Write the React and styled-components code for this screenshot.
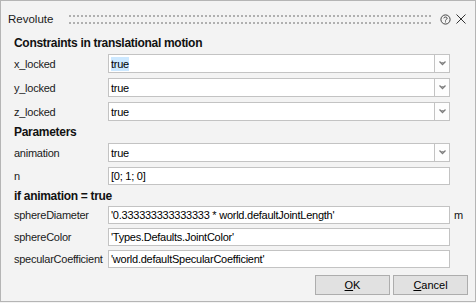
import React from "react";
import styled, { createGlobalStyle } from "styled-components";

const Global = createGlobalStyle`
  html, body { margin: 0; padding: 0; background: #f3f3f3; }
  body { font-family: "Liberation Sans", Arial, sans-serif; }
  * { box-sizing: border-box; }
`;

const Window = styled.div`
  width: 476px;
  height: 302px;
  border: 1px solid #b5b5b5;
  background: #f3f3f3;
  display: flex;
  flex-direction: column;
  color: #111;
  font-size: 11px;
  letter-spacing: -0.25px;
`;

const TitleBar = styled.div`
  height: 36px;
  display: flex;
  align-items: center;
  padding: 0 9px 0 7px;
`;

const Title = styled.span`
  font-size: 11.5px;
  letter-spacing: 0;
  color: #1a1a1a;
`;

const Grip = styled.div`
  flex: 1;
  height: 9px;
  margin: 0 7px 0 16px;
  display: flex;
`;

const IconBox = styled.div`
  display: flex;
  align-items: center;
  margin-left: ${(p) => p.$ml || 0}px;
`;

const Body = styled.div`
  flex: 1;
  display: flex;
  flex-direction: column;
  padding: 0 7px 0 13px;
`;

const Header = styled.div`
  font-weight: bold;
  height: 12px;
  line-height: 12px;
  font-size: 12px;
  letter-spacing: -0.3px;
  margin-bottom: ${(p) => p.$mb}px;
  color: #111;
`;

const Row = styled.div`
  display: grid;
  grid-template-columns: 94px 342px 1fr;
  align-items: center;
  height: ${(p) => p.$h}px;
  margin-bottom: ${(p) => p.$mb}px;
`;

const Label = styled.span`
  white-space: nowrap;
  color: #1a1a1a;
`;

const Field = styled.div`
  display: flex;
  height: 100%;
`;

const TextBox = styled.div`
  flex: 1;
  background: #fff;
  border: 1px solid #c3c3c3;
  padding-left: 2px;
  display: flex;
  align-items: center;
  white-space: nowrap;
  overflow: hidden;
  color: #000;
`;

const Selected = styled.span`
  background: #cce8ff;
  padding: 1px 0;
`;

const DropButton = styled.div`
  width: 15px;
  background: #fdfdfd;
  border: 1px solid #c3c3c3;
  border-left: none;
  display: flex;
  align-items: center;
  justify-content: center;
`;

const Unit = styled.span`
  padding-left: 4px;
`;

const Buttons = styled.div`
  display: flex;
  justify-content: flex-end;
  gap: 3px;
  margin-top: 7px;
`;

const Button = styled.div`
  width: 75px;
  height: 20px;
  border: 1px solid #adadad;
  background: #e1e1e1;
  display: flex;
  align-items: center;
  justify-content: center;
  letter-spacing: 0;
  color: #000;
  u { text-decoration: underline; }
`;

const Chevron = () => (
  <svg width="7" height="5" viewBox="0 0 7 5">
    <path d="M0.5 0.5 L3.5 3.5 L6.5 0.5" fill="none" stroke="#7a7a7a" strokeWidth="1.3" />
    <path d="M2.5 1 L3.5 2 L4.5 1" fill="none" stroke="#7a7a7a" strokeWidth="1" />
  </svg>
);

const Dots = () => (
  <svg width="100%" height="9">
    <defs>
      <pattern id="gripdots" width="4" height="7" patternUnits="userSpaceOnUse">
        <rect x="0" y="0" width="2" height="2" fill="#b0b0b0" />
      </pattern>
    </defs>
    <rect x="0" y="0" width="100%" height="9" fill="url(#gripdots)" />
  </svg>
);

const HelpIcon = () => (
  <svg width="11" height="11" viewBox="0 0 11 11">
    <circle cx="5.5" cy="5.5" r="4.6" fill="none" stroke="#444" strokeWidth="1" />
    <path d="M3.8 4.3 C3.8 2.6 7.2 2.6 7.2 4.3 C7.2 5.4 5.5 5.4 5.5 6.6" fill="none" stroke="#444" strokeWidth="1" />
    <rect x="5" y="7.4" width="1" height="1" fill="#444" />
  </svg>
);

const CloseIcon = () => (
  <svg width="10" height="10" viewBox="0 0 10 10">
    <path d="M0.5 0.5 L9.5 9.5 M9.5 0.5 L0.5 9.5" stroke="#333" strokeWidth="1" />
  </svg>
);

const ComboRow = ({ label, value, selected, mb }) => (
  <Row $h={19} $mb={mb}>
    <Label>{label}</Label>
    <Field>
      <TextBox>{selected ? <Selected>{value}</Selected> : value}</TextBox>
      <DropButton>
        <Chevron />
      </DropButton>
    </Field>
    <span />
  </Row>
);

const TextRow = ({ label, value, unit, mb, h = 18 }) => (
  <Row $h={h} $mb={mb}>
    <Label>{label}</Label>
    <Field>
      <TextBox>{value}</TextBox>
    </Field>
    <Unit>{unit}</Unit>
  </Row>
);

export default function App() {
  return (
    <>
      <Global />
      <Window>
        <TitleBar>
          <Title>Revolute</Title>
          <Grip>
            <Dots />
          </Grip>
          <IconBox $ml={0}>
            <HelpIcon />
          </IconBox>
          <IconBox $ml={5}>
            <CloseIcon />
          </IconBox>
        </TitleBar>
        <Body>
          <Header $mb={5}>Constraints in translational motion</Header>
          <ComboRow label="x_locked" value="true" selected mb={5} />
          <ComboRow label="y_locked" value="true" mb={5} />
          <ComboRow label="z_locked" value="true" mb={5} />
          <Header $mb={5}>Parameters</Header>
          <ComboRow label="animation" value="true" mb={5} />
          <TextRow label="n" value="[0; 1; 0]" mb={5} />
          <Header $mb={4}>if animation = true</Header>
          <TextRow
            label="sphereDiameter"
            value="'0.333333333333333 * world.defaultJointLength'"
            unit="m"
            mb={4}
          />
          <TextRow label="sphereColor" value="'Types.Defaults.JointColor'" mb={4} />
          <TextRow
            label="specularCoefficient"
            value="'world.defaultSpecularCoefficient'"
            mb={0}
          />
          <Buttons>
            <Button>
              <u>O</u>K
            </Button>
            <Button>
              <u>C</u>ancel
            </Button>
          </Buttons>
        </Body>
      </Window>
    </>
  );
}
